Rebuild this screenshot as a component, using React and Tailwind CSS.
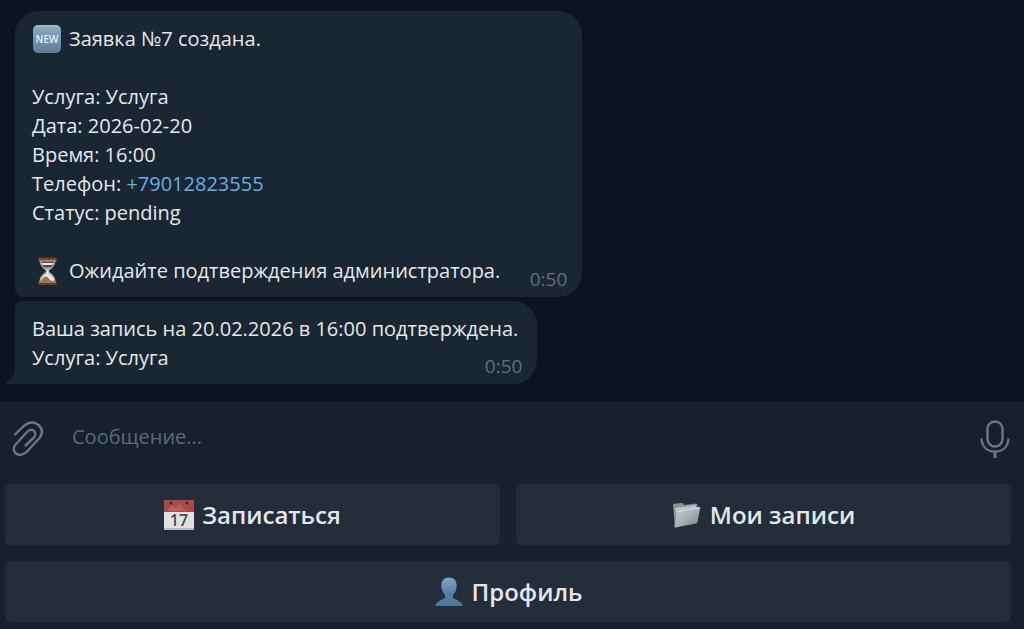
import React, { useState } from 'react';
import { cx } from 'class-variance-authority';

function NewIcon() {
  return (
    <svg viewBox="0 0 30 30" className="w-[30px] h-[30px] -my-1 shrink-0" aria-hidden="true">
      <defs>
        <linearGradient id="newBg" x1="0" y1="0" x2="0" y2="1">
          <stop offset="0" stopColor="#93aec6" />
          <stop offset="0.45" stopColor="#7594b0" />
          <stop offset="1" stopColor="#5f7e9a" />
        </linearGradient>
      </defs>
      <rect x="1" y="1" width="28" height="28" rx="5" fill="url(#newBg)" />
      <path d="M3 3.5q1-1.5 3-1.5h18q2 0 3 1.5" fill="none" stroke="#b9cddd" strokeOpacity="0.6" />
      <text x="15" y="19" textAnchor="middle" fontFamily="Open Sans, sans-serif" fontWeight="600" fontSize="10" fill="#e6eef5">
        NEW
      </text>
    </svg>
  );
}

function HourglassIcon() {
  return (
    <svg viewBox="0 0 30 30" className="w-[30px] h-[30px] -my-1 shrink-0" aria-hidden="true">
      <path d="M7.5 4h16c0 5-3 8-6.3 10.5v1.5c3.5 2 6.3 5 6.3 10h-16c0-5 2.8-8 6.3-10v-1.5C10.5 12 7.5 9 7.5 4z" fill="#a9b4b9" />
      <path d="M9 5.5h13c-.3 2.5-1.5 4.5-3 6h-7c-1.5-1.5-2.7-3.5-3-6z" fill="#5f4a45" />
      <path d="M9.5 7h12l-1 2h-10z" fill="#f0e4da" />
      <path d="M14.5 14h2v4c3 1.5 4.8 3.5 5.5 6.5H9c.7-3 2.5-5 5.5-6.5z" fill="#e9ecea" />
      <path d="M9 25c1-3 3.5-4.5 6-4.5l4 4.5z" fill="#a56f43" />
      <rect x="6" y="1.5" width="19" height="2" rx="1" fill="#5d4439" />
      <rect x="6.5" y="3.5" width="18" height="2" rx="1" fill="#b07562" />
      <rect x="6.5" y="25" width="18" height="2" rx="1" fill="#a1764f" />
      <rect x="6" y="27" width="19" height="2" rx="1" fill="#5b4030" />
    </svg>
  );
}

function CalendarIcon() {
  return (
    <svg viewBox="0 0 30 30" className="w-[30px] h-[30px] shrink-0" aria-hidden="true">
      <rect x="0" y="0" width="30" height="30" rx="1" fill="#e2e1e0" />
      <path d="M1 0h28q1 0 1 1v11H0V1q0-1 1-1z" fill="#a94b44" />
      <path d="M3 11l5-6 4 3 3-4 8 7z" fill="#bd6158" />
      <circle cx="7" cy="3" r="1.5" fill="#4b2027" />
      <circle cx="23" cy="3" r="1.5" fill="#4b2027" />
      <rect x="0" y="28" width="30" height="2" fill="#bcbcbd" />
      <text x="15" y="26" textAnchor="middle" fontFamily="Open Sans, sans-serif" fontWeight="600" fontSize="16" fill="#444b55">
        17
      </text>
    </svg>
  );
}

function FolderIcon() {
  return (
    <svg viewBox="0 0 30 30" className="w-[30px] h-[30px] shrink-0" aria-hidden="true">
      <defs>
        <linearGradient id="folderFront" x1="0" y1="0" x2="1" y2="1">
          <stop offset="0" stopColor="#c3c9ce" />
          <stop offset="0.5" stopColor="#a9b0b6" />
          <stop offset="1" stopColor="#747e87" />
        </linearGradient>
      </defs>
      <path d="M1 5q0-1 1-1.2l8-.8q1 0 1.5 1l.5 1 12-1.5q1.5 0 1.500 1.500V21L3 27z" fill="#87929b" />
      <path d="M3 8l21-3v4L4 14z" fill="#bcc5cb" />
      <path d="M5 11.500q.3-1.200 1.500-1.400L27 7q1.500-.2 1.200 1.200L25.500 22q-.3 1.200-1.500 1.500L3.500 27.500q-1.200.2-1-1z" fill="url(#folderFront)" />
      <path d="M5.500 11.500L28 8" stroke="#dde1e4" strokeWidth="1" />
    </svg>
  );
}

function PersonIcon() {
  return (
    <svg viewBox="0 0 30 30" className="w-[30px] h-[30px] shrink-0" aria-hidden="true">
      <defs>
        <linearGradient id="person" x1="0" y1="0" x2="0" y2="1">
          <stop offset="0" stopColor="#80a6c5" />
          <stop offset="0.55" stopColor="#587f9f" />
          <stop offset="1" stopColor="#47769b" />
        </linearGradient>
      </defs>
      <path
        d="M15 .5c5 0 7.7 3.3 7.7 8 0 4.5-1.7 7.5-3.7 9.5v2.5c0 2 9 2.5 9.8 8.5H1.2c.8-6 9.8-6.5 9.8-8.5V18c-2-2-3.7-5-3.7-9.5 0-4.7 2.7-8 7.7-8z"
        fill="url(#person)"
      />
    </svg>
  );
}

function ClipIcon() {
  return (
    <svg viewBox="0 0 32 36" className="w-8 h-9" fill="none" stroke="#6b7783" strokeWidth="2.4" strokeLinecap="round" aria-hidden="true">
      <path d="M3 13.5L12.500 4.500C17 .5 23 .8 26.500 4c4 3.800 4.500 8.500 1 13L15.500 30c-3.500 4-8.500 5-11.500 2.500s-3-6.500 0-9.500L14.500 11.500c2.500-2.500 5.500-3.500 7.500-1.500s1.500 4.500-.5 7L13.500 24.500" />
    </svg>
  );
}

function MicIcon() {
  return (
    <svg viewBox="0 0 30 38" className="w-[30px] h-[38px]" fill="none" stroke="#6b7783" strokeWidth="2.4" aria-hidden="true">
      <rect x="7.5" y="1.5" width="15" height="25" rx="7.5" />
      <path d="M1.5 18.5C2 27 7.5 31.5 15 31.5S28 27 28.5 18.5" />
      <path d="M15 31.5V38" strokeWidth="3" />
    </svg>
  );
}

function Bubble({ time, tail, className, children }) {
  return (
    <div className={cx('relative w-fit bg-[#1a2631] pl-[17px] pt-[13px] pb-3', className)}>
      {tail && (
        <svg viewBox="0 0 11 18" className="absolute bottom-0 -left-2.5 w-[11px] h-[18px]" aria-hidden="true">
          <path d="M11 0h-1c0 8-3 13-9 16.5Q0 18 2 18h9z" fill="#1a2631" />
        </svg>
      )}
      {children}
      <time className="absolute right-[15px] bottom-2 text-[19px] leading-5 text-[#63707c]">{time}</time>
    </div>
  );
}

function KeyboardButton({ icon, className, children }) {
  return (
    <button
      type="button"
      className={cx('flex items-center justify-center gap-2 h-[61px] rounded-md bg-[#242e3a] hover:bg-[#2b3643] text-2xl font-semibold text-[#e3e7eb]', className)}
    >
      {icon}
      <span>{children}</span>
    </button>
  );
}

export default function App() {
  const [message, setMessage] = useState('');

  return (
    <div className="min-h-screen flex flex-col bg-[#0c151f] font-['Open_Sans',sans-serif]">
      <main className="flex-1 flex flex-col gap-1 pt-[11px] pb-[18px] pl-[15px] text-xl leading-[29px] text-[#e4e9ed]">
        <Bubble time="0:50" className="pr-[82px] rounded-3xl rounded-bl-lg">
          <p className="flex items-center gap-[7px]">
            <NewIcon />
            Заявка №7 создана.
          </p>
          <br />
          <p>Услуга: Услуга</p>
          <p>Дата: 2026-02-20</p>
          <p>Время: 16:00</p>
          <p>
            Телефон:{' '}
            <a href="tel:+79012823555" className="text-[#64b0e4]">+79012823555</a>
          </p>
          <p>Статус: pending</p>
          <br />
          <p className="flex items-center gap-[7px]">
            <HourglassIcon />
            Ожидайте подтверждения администратора.
          </p>
        </Bubble>

        <Bubble time="0:50" tail className="pr-[19px] rounded-3xl rounded-tl-lg rounded-bl-none">
          <p>Ваша запись на 20.02.2026 в 16:00 подтверждена.</p>
          <p>Услуга: Услуга</p>
        </Bubble>
      </main>

      <footer className="bg-[#17212b] pb-[7px]">
        <div className="flex items-center h-[82px] pl-3 pr-3.5 pb-2">
          <button type="button" aria-label="Прикрепить файл">
            <ClipIcon />
          </button>
          <input
            type="text"
            aria-label="Сообщение"
            placeholder="Сообщение..."
            value={message}
            onChange={(e) => setMessage(e.target.value)}
            className="flex-1 min-w-0 mx-7 pb-1 bg-transparent outline-none text-xl text-[#e4e9ed] placeholder:text-[#5d6a76]"
          />
          <button type="button" aria-label="Записать голосовое сообщение">
            <MicIcon />
          </button>
        </div>

        <div className="grid grid-cols-2 gap-4 pl-[5px] pr-[13px]">
          <KeyboardButton icon={<CalendarIcon />}>Записаться</KeyboardButton>
          <KeyboardButton icon={<FolderIcon />}>Мои записи</KeyboardButton>
          <KeyboardButton icon={<PersonIcon />} className="col-span-2">Профиль</KeyboardButton>
        </div>
      </footer>
    </div>
  );
}
